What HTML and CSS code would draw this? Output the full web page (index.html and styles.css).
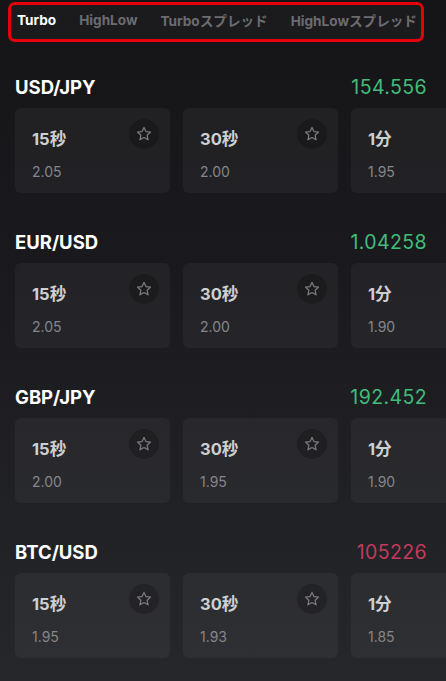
FILE: index.html
```html
<!DOCTYPE html>
<html lang="ja">
<head>
    <meta charset="UTF-8">
    <meta name="viewport" content="width=device-width, initial-scale=1.0">
    <title>Turbo</title>
    <link rel="stylesheet" href="styles.css">
</head>
<body>
    <div class="tabs">
        <span class="tab active">Turbo</span>
        <span class="tab">HighLow</span>
        <span class="tab">Turboスプレッド</span>
        <span class="tab">HighLowスプレッド</span>
    </div>

    <div class="markets">
        <!-- USD/JPY -->
        <section class="market">
            <div class="market-head">
                <h2>USD/JPY</h2>
                <span class="price up">154.556</span>
            </div>
            <div class="cards">
                <div class="card"><div class="card-top"><span class="dur">15秒</span><span class="fav"><svg viewBox="0 0 24 24"><path d="M12 3.2l2.6 5.6 6.1.7-4.5 4.2 1.2 6.1L12 16.8l-5.4 3 1.2-6.1-4.5-4.2 6.1-.7z"/></svg></span></div><div class="rate">2.05</div></div>
                <div class="card"><div class="card-top"><span class="dur">30秒</span><span class="fav"><svg viewBox="0 0 24 24"><path d="M12 3.2l2.6 5.6 6.1.7-4.5 4.2 1.2 6.1L12 16.8l-5.4 3 1.2-6.1-4.5-4.2 6.1-.7z"/></svg></span></div><div class="rate">2.00</div></div>
                <div class="card"><div class="card-top"><span class="dur">1分</span></div><div class="rate">1.95</div></div>
            </div>
        </section>

        <!-- EUR/USD -->
        <section class="market">
            <div class="market-head">
                <h2>EUR/USD</h2>
                <span class="price up">1.04258</span>
            </div>
            <div class="cards">
                <div class="card"><div class="card-top"><span class="dur">15秒</span><span class="fav"><svg viewBox="0 0 24 24"><path d="M12 3.2l2.6 5.6 6.1.7-4.5 4.2 1.2 6.1L12 16.8l-5.4 3 1.2-6.1-4.5-4.2 6.1-.7z"/></svg></span></div><div class="rate">2.05</div></div>
                <div class="card"><div class="card-top"><span class="dur">30秒</span><span class="fav"><svg viewBox="0 0 24 24"><path d="M12 3.2l2.6 5.6 6.1.7-4.5 4.2 1.2 6.1L12 16.8l-5.4 3 1.2-6.1-4.5-4.2 6.1-.7z"/></svg></span></div><div class="rate">2.00</div></div>
                <div class="card"><div class="card-top"><span class="dur">1分</span></div><div class="rate">1.90</div></div>
            </div>
        </section>

        <!-- GBP/JPY -->
        <section class="market">
            <div class="market-head">
                <h2>GBP/JPY</h2>
                <span class="price up">192.452</span>
            </div>
            <div class="cards">
                <div class="card"><div class="card-top"><span class="dur">15秒</span><span class="fav"><svg viewBox="0 0 24 24"><path d="M12 3.2l2.6 5.6 6.1.7-4.5 4.2 1.2 6.1L12 16.8l-5.4 3 1.2-6.1-4.5-4.2 6.1-.7z"/></svg></span></div><div class="rate">2.00</div></div>
                <div class="card"><div class="card-top"><span class="dur">30秒</span><span class="fav"><svg viewBox="0 0 24 24"><path d="M12 3.2l2.6 5.6 6.1.7-4.5 4.2 1.2 6.1L12 16.8l-5.4 3 1.2-6.1-4.5-4.2 6.1-.7z"/></svg></span></div><div class="rate">1.95</div></div>
                <div class="card"><div class="card-top"><span class="dur">1分</span></div><div class="rate">1.90</div></div>
            </div>
        </section>

        <!-- BTC/USD -->
        <section class="market">
            <div class="market-head">
                <h2>BTC/USD</h2>
                <span class="price down">105226</span>
            </div>
            <div class="cards">
                <div class="card"><div class="card-top"><span class="dur">15秒</span><span class="fav"><svg viewBox="0 0 24 24"><path d="M12 3.2l2.6 5.6 6.1.7-4.5 4.2 1.2 6.1L12 16.8l-5.4 3 1.2-6.1-4.5-4.2 6.1-.7z"/></svg></span></div><div class="rate">1.95</div></div>
                <div class="card"><div class="card-top"><span class="dur">30秒</span><span class="fav"><svg viewBox="0 0 24 24"><path d="M12 3.2l2.6 5.6 6.1.7-4.5 4.2 1.2 6.1L12 16.8l-5.4 3 1.2-6.1-4.5-4.2 6.1-.7z"/></svg></span></div><div class="rate">1.93</div></div>
                <div class="card"><div class="card-top"><span class="dur">1分</span></div><div class="rate">1.85</div></div>
            </div>
        </section>
    </div>
</body>
</html>
```

FILE: styles.css
```css
body {
    margin: 0;
    padding: 2px 0 0;
    height: 679px;
    overflow: hidden;
    background: linear-gradient(#151518 0%, #1a1a1e 40%, #26272b 100%);
    color: #fff;
    font-family: Inter, "Noto Sans CJK JP", sans-serif;
}

.tabs {
    margin: 0 22px 0 8px;
    border: 3px solid #e6000c;
    border-radius: 7px;
    background-color: #1b1b1e;
    display: flex;
    align-items: center;
    padding: 0 0 4px 6px;
    height: 30px;
    overflow: hidden;
}

.tab {
    font-size: 13.6px;
    font-weight: 700;
    color: #6b6b70;
    white-space: nowrap;
}

.tab + .tab {
    margin-left: 23px;
}

.tab.active {
    color: #fff;
}

.markets {
    padding: 33px 0 0 15px;
}

.market {
    margin-bottom: 37px;
}

.market-head {
    height: 24px;
    display: flex;
    align-items: center;
    justify-content: space-between;
    padding-right: 19px;
    margin-bottom: 9px;
}

.market-head h2 {
    margin: 0;
    font-size: 18.5px;
    font-weight: 700;
    color: #fff;
}

.price {
    font-size: 19.5px;
    font-weight: 400;
    letter-spacing: 0.4px;
}

.price.up { color: #41bd7a; }
.price.down { color: #c23a5c; }

.cards {
    display: flex;
    gap: 13px;
    overflow: hidden;
}

.card {
    flex: 0 0 155px;
    height: 85px;
    box-sizing: border-box;
    padding: 15px 11px 0 17px;
    background-color: rgba(255, 255, 255, 0.045);
    border-radius: 6px;
}

.card-top {
    height: 31px;
    display: flex;
    justify-content: space-between;
    align-items: flex-start;
}

.dur {
    margin-top: 3px;
    font-size: 16.5px;
    font-weight: 700;
    color: #cfcfd2;
}

.fav {
    width: 30px;
    height: 30px;
    border-radius: 50%;
    background-color: rgba(0, 0, 0, 0.22);
    display: flex;
    align-items: center;
    justify-content: center;
    margin-top: -4px;
}

.fav svg {
    width: 18px;
    height: 18px;
    fill: none;
    stroke: #7d7d82;
    stroke-width: 1.6;
    stroke-linejoin: round;
}

.rate {
    margin-top: 9px;
    font-size: 14px;
    color: #85858a;
}
```
